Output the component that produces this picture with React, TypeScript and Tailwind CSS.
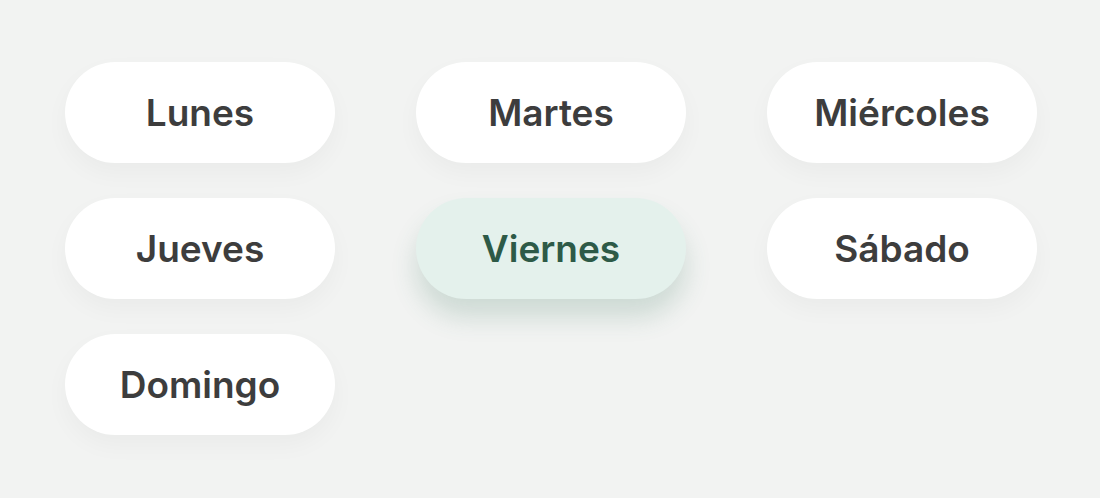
import React from 'react';

const days = ['Lunes', 'Martes', 'Miércoles', 'Jueves', 'Viernes', 'Sábado', 'Domingo'];

const App: React.FC = () => {
  const selected = 'Viernes';

  return (
    <div className="w-[1100px] h-[498px] bg-[#f2f3f2] pl-[65px] pt-[62px] font-['Inter','Noto_Sans',sans-serif]">
      <div className="grid grid-cols-[270px_270px_270px] gap-x-[81px] gap-y-[35px]">
        {days.map((day) => {
          const active = day === selected;
          return (
            <button
              key={day}
              className={
                active
                  ? 'h-[101px] rounded-full bg-[#e4f1ec] text-[#2d5a47] text-[37px] font-semibold shadow-[0_18px_26px_rgba(60,120,95,0.2)]'
                  : 'h-[101px] rounded-full bg-white text-[#3d3d3d] text-[37px] font-semibold shadow-[0_10px_24px_rgba(0,0,0,0.035)]'
              }
            >
              {day}
            </button>
          );
        })}
      </div>
    </div>
  );
};

export default App;
